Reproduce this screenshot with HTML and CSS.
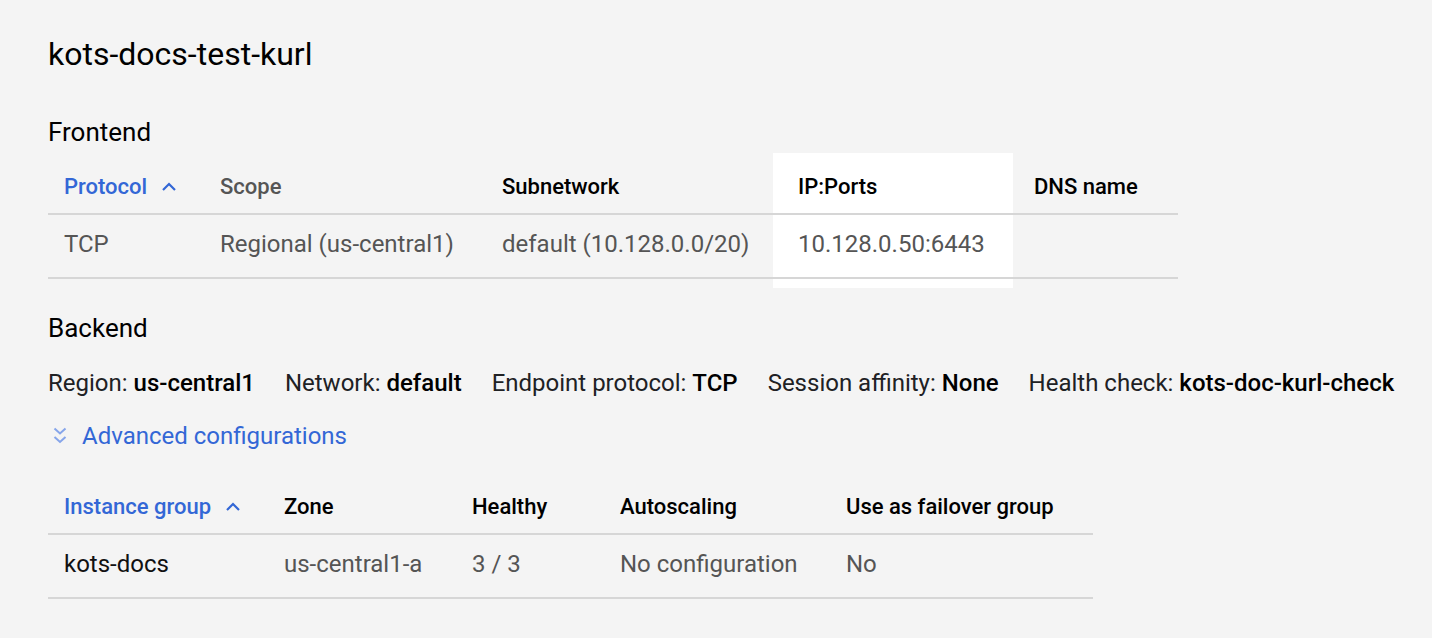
FILE: index.html
```html
<!DOCTYPE html>
<html>
<head>
<meta charset="utf-8">
<link rel="stylesheet" href="styles.css">
</head>
<body>
<div class="page">
  <h1 class="title">kots-docs-test-kurl</h1>

  <h2 class="section">Frontend</h2>
  <table class="grid frontend">
    <thead>
      <tr>
        <th class="c1 sort">Protocol <svg class="arrow" width="16" height="10" viewBox="0 0 16 10"><polyline points="2,8 8,2 14,8" fill="none" stroke="#3367d6" stroke-width="2.2"/></svg></th>
        <th class="c2 muted">Scope</th>
        <th class="c3">Subnetwork</th>
        <th class="c4 hl">IP:Ports</th>
        <th class="c5">DNS name</th>
      </tr>
    </thead>
    <tbody>
      <tr>
        <td>TCP</td>
        <td>Regional (us-central1)</td>
        <td>default (10.128.0.0/20)</td>
        <td class="hl">10.128.0.50:6443</td>
        <td></td>
      </tr>
    </tbody>
  </table>

  <h2 class="section backend">Backend</h2>
  <div class="info">
    <span>Region: <b>us-central1</b></span>
    <span>Network: <b>default</b></span>
    <span>Endpoint protocol: <b>TCP</b></span>
    <span>Session affinity: <b>None</b></span>
    <span>Health check: <b>kots-doc-kurl-check</b></span>
  </div>
  <div class="advanced">
    <svg class="dchev" width="16" height="20" viewBox="0 0 16 20"><polyline points="2.5,2.5 8,7.5 13.5,2.5" fill="none" stroke="#86a5ea" stroke-width="2"/><polyline points="2.5,11 8,16 13.5,11" fill="none" stroke="#86a5ea" stroke-width="2"/></svg>
    <span>Advanced configurations</span>
  </div>

  <table class="grid backend-table">
    <thead>
      <tr>
        <th class="d1 sort">Instance group <svg class="arrow" width="16" height="10" viewBox="0 0 16 10"><polyline points="2,8 8,2 14,8" fill="none" stroke="#3367d6" stroke-width="2.2"/></svg></th>
        <th class="d2">Zone</th>
        <th class="d3">Healthy</th>
        <th class="d4">Autoscaling</th>
        <th class="d5">Use as failover group</th>
      </tr>
    </thead>
    <tbody>
      <tr>
        <td class="dark">kots-docs</td>
        <td>us-central1-a</td>
        <td>3 / 3</td>
        <td>No configuration</td>
        <td>No</td>
      </tr>
    </tbody>
  </table>
</div>
</body>
</html>
```

FILE: styles.css
```css
html, body {
  margin: 0;
  padding: 0;
  background: #f4f4f4;
}

body {
  font-family: Roboto, "Liberation Sans", Arial, sans-serif;
  color: #202124;
}

.page {
  padding: 34px 0 0 48px;
}

.title {
  margin: 0;
  font-size: 32px;
  line-height: 40px;
  font-weight: 400;
  color: #000;
}

.section {
  margin: 42px 0 0 0;
  font-size: 26px;
  line-height: 32px;
  font-weight: 400;
  color: #000;
}

.section.backend {
  margin-top: 33px;
}

.grid {
  border-collapse: collapse;
  margin-top: 12px;
}

.grid th {
  height: 53px;
  padding: 0 16px;
  text-align: left;
  font-size: 22px;
  font-weight: 500;
  color: #000;
  border-bottom: 2px solid #d6d6d6;
  white-space: nowrap;
  vertical-align: middle;
}

.grid td {
  height: 57px;
  padding: 0 16px 5px 16px;
  text-align: left;
  font-size: 24px;
  color: #555;
  border-bottom: 2px solid #d6d6d6;
  white-space: nowrap;
  vertical-align: middle;
}

.grid th.sort {
  color: #3367d6;
}

.grid th.muted {
  color: #555;
}

.grid td.dark {
  color: #111;
}

.arrow {
  margin-left: 8px;
  vertical-align: 2px;
}

.frontend .c1 { width: 124px; }
.frontend .c2 { width: 250px; }
.frontend .c3 { width: 255px; }
.frontend .c4 { width: 199px; padding-left: 25px; }
.frontend .c5 { width: 128px; padding-left: 21px; }

.grid .hl {
  background: #fff;
}

.grid th.hl {
  box-shadow: 0 -7px 0 0 #fff;
}

.grid td.hl {
  box-shadow: 0 10px 0 0 #fff;
}

.frontend td:nth-child(4) {
  padding-left: 25px;
}

.frontend td:nth-child(5) {
  padding-left: 21px;
}

.info {
  display: flex;
  gap: 30px;
  margin-top: 24px;
  font-size: 24px;
  line-height: 30px;
  color: #202124;
  white-space: nowrap;
}

.info b {
  font-weight: 500;
  color: #000;
}

.advanced {
  display: flex;
  align-items: center;
  margin-top: 23px;
  height: 30px;
  font-size: 24px;
  color: #3367d6;
}

.dchev {
  margin-left: 4px;
  margin-right: 14px;
}

.backend-table {
  margin-top: 29px;
}

.backend-table .d1 { width: 188px; }
.backend-table .d2 { width: 156px; }
.backend-table .d3 { width: 116px; }
.backend-table .d4 { width: 194px; }
.backend-table .d5 { width: 231px; }
```
